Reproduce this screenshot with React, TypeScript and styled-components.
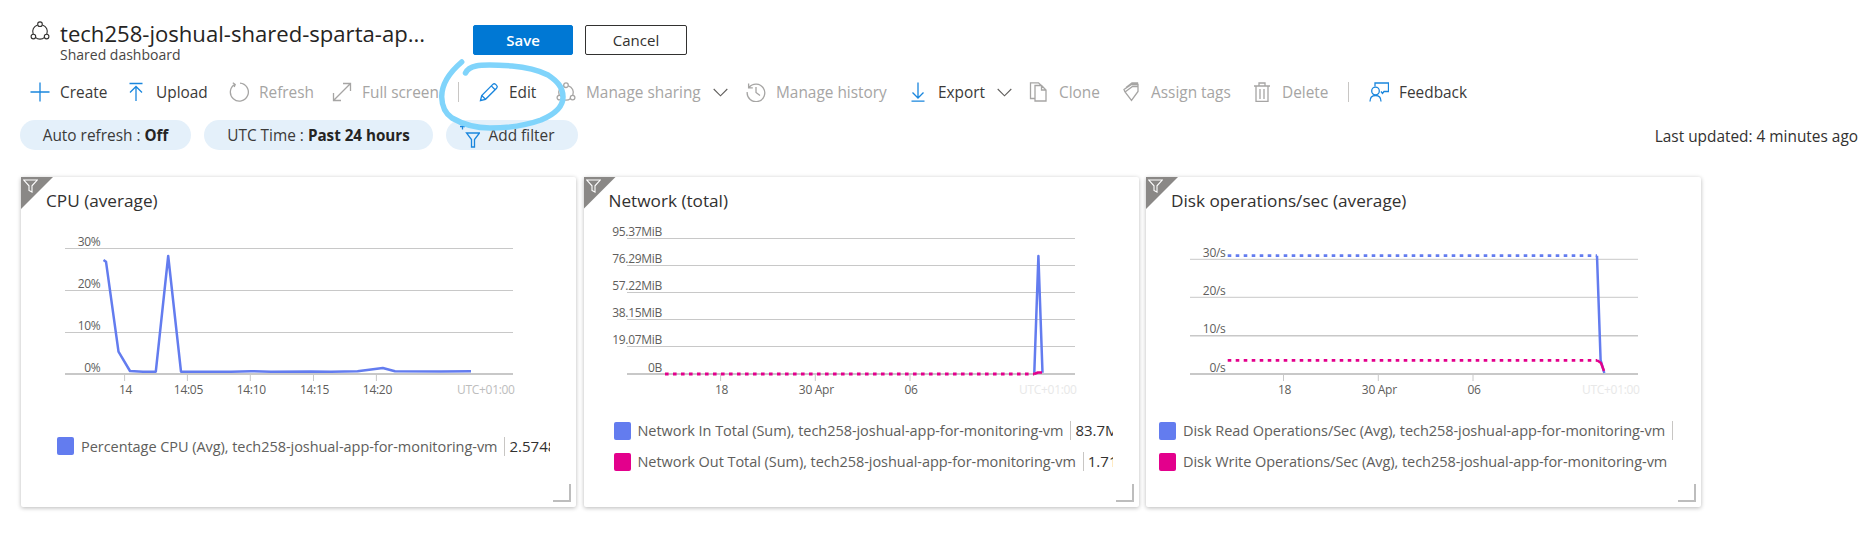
import * as React from 'react'
import styled, { createGlobalStyle } from 'styled-components'

const GlobalStyle = createGlobalStyle`
  html, body {
    margin: 0;
    padding: 0;
    background: #fff;
  }
  body {
    font-family: 'Open Sans', 'Noto Sans', sans-serif;
    color: #323130;
  }
`

const Page = styled.div`
  position: relative;
  width: 1867px;
  height: 543px;
  overflow: hidden;
`

const TitleRow = styled.div`
  display: flex;
  align-items: flex-start;
  padding: 19px 0 0 30px;
`

const TitleIcon = styled.svg`
  width: 20px;
  height: 20px;
  margin-top: 2px;
  flex: none;
`

const TitleBlock = styled.div`
  width: 413px;
  margin-left: 10px;
`

const Title = styled.div`
  font-size: 22.1px;
  line-height: 28px;
  white-space: nowrap;
  color: #252423;
`

const SubTitle = styled.div`
  font-size: 14px;
  line-height: 16px;
  color: #484644;
`

const HeaderButton = styled.button<{ $primary?: boolean }>`
  width: ${p => (p.$primary ? '100px' : '102px')};
  height: 30px;
  margin: 6px 12px 0 0;
  padding: 0;
  border-radius: 2px;
  border: 1px solid ${p => (p.$primary ? '#0078d4' : '#323130')};
  background: ${p => (p.$primary ? '#0078d4' : '#fff')};
  color: ${p => (p.$primary ? '#fff' : '#323130')};
  font-family: inherit;
  font-size: 15px;
  font-weight: ${p => (p.$primary ? 600 : 500)};
`

const Toolbar = styled.div`
  display: flex;
  align-items: center;
  height: 30px;
  margin: 14px 0 0 30px;
`

const ToolItem = styled.div<{ $w: number; $disabled?: boolean }>`
  display: flex;
  align-items: center;
  flex: none;
  width: ${p => p.$w}px;
  font-size: 15.4px;
  white-space: nowrap;
  color: ${p => (p.$disabled ? '#a6a5a4' : '#3b3a39')};
`

const ToolIcon = styled.svg`
  width: 20px;
  height: 20px;
  flex: none;
  margin-right: 10px;
`

const Chevron = styled.svg`
  width: 15px;
  height: 9px;
  margin-left: 12px;
  flex: none;
`

const ToolSep = styled.div<{ $w: number }>`
  flex: none;
  width: ${p => p.$w}px;
  height: 20px;
  box-sizing: border-box;
  border-left: 1px solid #c8c6c4;
`

const FilterBar = styled.div`
  display: flex;
  align-items: center;
  gap: 13px;
  margin: 13px 0 0 20px;
  height: 30px;
`

const Pill = styled.div<{ $w: number }>`
  display: flex;
  align-items: center;
  justify-content: center;
  box-sizing: border-box;
  width: ${p => p.$w}px;
  height: 30px;
  border-radius: 15px;
  background: #e4f0fa;
  font-size: 15.4px;
  white-space: nowrap;
  color: #3b3a39;

  b {
    font-weight: 700;
    font-size: 15.2px;
    color: #252423;
    margin-left: 4px;
  }
`

const FilterIcon = styled.svg`
  width: 20px;
  height: 26px;
  margin: 2px 9px 0 -10px;
`

const LastUpdated = styled.div`
  margin-left: auto;
  margin-right: 9px;
  padding-top: 3px;
  font-size: 15.4px;
  color: #323130;
`

const CardRow = styled.div`
  display: flex;
  gap: 7.5px;
  margin: 27px 0 0 21px;
`

const Card = styled.div`
  position: relative;
  box-sizing: border-box;
  width: 555px;
  height: 330px;
  background: #fff;
  border-radius: 2px;
  box-shadow: 0 1px 4px rgba(0, 0, 0, 0.28);
`

const Corner = styled.div`
  position: absolute;
  left: 0;
  top: 0;
  width: 32px;
  height: 32px;
  background: #8a8886;
  clip-path: polygon(0 0, 100% 0, 0 100%);
`

const CornerIcon = styled.svg`
  position: absolute;
  left: 2px;
  top: 2px;
  width: 15px;
  height: 14px;
`

const CardTitle = styled.div`
  height: 48px;
  padding-left: 25px;
  font-size: 17.2px;
  line-height: 47px;
  color: #323130;
`

const ChartSvg = styled.svg`
  display: block;
  width: 555px;
  height: 175px;
`

const AxisText = styled.text<{ $fill?: string }>`
  font-family: 'Open Sans', 'Noto Sans', sans-serif;
  font-size: 12px;
  letter-spacing: -0.3px;
  fill: ${p => p.$fill || '#605e5c'};
  dominant-baseline: central;
`

const Legend = styled.div<{ $left: number; $width: number }>`
  display: flex;
  flex-direction: column;
  justify-content: center;
  gap: 13px;
  box-sizing: border-box;
  height: 92px;
  margin-left: ${p => p.$left}px;
  width: ${p => p.$width}px;
  overflow: hidden;
`

const LegendRow = styled.div`
  display: flex;
  align-items: center;
  height: 18px;
  white-space: nowrap;
`

const Swatch = styled.div<{ $color: string }>`
  flex: none;
  width: 17px;
  height: 18px;
  border-radius: 2px;
  background: ${p => p.$color};
`

const LegendLabel = styled.div`
  flex: none;
  margin-left: 7px;
  padding-right: 7px;
  font-size: 14.5px;
  letter-spacing: -0.05px;
  color: #605e5c;
`

const LegendValue = styled.div`
  flex: none;
  height: 19px;
  padding-left: 4px;
  border-left: 1px solid #c8c6c4;
  font-size: 15px;
  line-height: 19px;
  color: #323130;
`

const ResizeHandle = styled.div`
  position: absolute;
  right: 5px;
  bottom: 5px;
  width: 16px;
  height: 16px;
  border-right: 2px solid #bdbdbd;
  border-bottom: 2px solid #bdbdbd;
`

const PenMark = styled.svg`
  position: absolute;
  left: 0;
  top: 0;
  width: 1867px;
  height: 543px;
  pointer-events: none;
`

const BLUE = '#1a86dd'
const GREY = '#a6a5a4'
const SERIES_BLUE = '#637cef'
const SERIES_PINK = '#e3008c'

const Glyph: React.FC<{ color: string; w?: number; children: React.ReactNode }> = ({ color, w = 1.3, children }) => (
  <ToolIcon viewBox="0 0 20 20" fill="none" stroke={color} strokeWidth={w}>
    {children}
  </ToolIcon>
)

const SharePaths = () => (
  <>
    <path d="M7.6 3.9A7 7 0 0 0 3.2 13.2M12.4 3.9A7 7 0 0 1 16.8 13.2M5.4 16.4a7 7 0 0 0 9.2 0" />
    <circle cx="10" cy="3.2" r="2.3" />
    <circle cx="3.4" cy="15.6" r="2.3" />
    <circle cx="16.6" cy="15.6" r="2.3" />
  </>
)

const DownChevron = () => (
  <Chevron viewBox="0 0 15 9" fill="none" stroke="#605e5c" strokeWidth="1.1">
    <path d="M0.7 1l6.8 6.8L14.3 1" />
  </Chevron>
)

type Series = { color: string; dashed?: string; solid: string }

type ChartDef = {
  title: string
  grid: { y: number; w?: number }[]
  left: number
  labelRight: number
  yLabels: { text: string; y: number }[]
  ticks: { x: number; text: string }[]
  utc: { x: number; fill: string }
  series: Series[]
  legend: { left: number; width: number; rows: { color: string; label: string; value?: string }[] }
}

const VM = 'tech258-joshual-app-for-monitoring-vm'

const charts: ChartDef[] = [
  {
    title: 'CPU (average)',
    left: 44,
    labelRight: 79.5,
    grid: [{ y: 23.5 }, { y: 65.5 }, { y: 107.5 }, { y: 149, w: 2 }],
    yLabels: [
      { text: '30%', y: 16.7 },
      { text: '20%', y: 58.7 },
      { text: '10%', y: 100.7 },
      { text: '0%', y: 142.7 },
    ],
    ticks: [
      { x: 103.6, text: '14' },
      { x: 166.4, text: '14:05' },
      { x: 229.3, text: '14:10' },
      { x: 292.5, text: '14:15' },
      { x: 355.4, text: '14:20' },
    ],
    utc: { x: 436, fill: '#bdbdbd' },
    series: [
      {
        color: SERIES_BLUE,
        solid:
          '82.5,35 85,36.7 97.5,126.7 109,146 122,146.7 134.8,146.7 147.2,31 160,146.7 210,146.7 230,146.2 250,146.7 290,146.4 310,146.7 336.5,146.3 361.8,143 374,146.3 420,146.5 450,146.3',
      },
    ],
    legend: {
      left: 36,
      width: 492.5,
      rows: [{ color: SERIES_BLUE, label: `Percentage CPU (Avg), ${VM}`, value: '2.5748 %' }],
    },
  },
  {
    title: 'Network (total)',
    left: 43,
    labelRight: 78,
    grid: [{ y: 13.5 }, { y: 40.5 }, { y: 67.5 }, { y: 94.5 }, { y: 121.5 }, { y: 149, w: 2 }],
    yLabels: [
      { text: '95.37MiB', y: 6.3 },
      { text: '76.29MiB', y: 33.3 },
      { text: '57.22MiB', y: 60.3 },
      { text: '38.15MiB', y: 87.7 },
      { text: '19.07MiB', y: 114.7 },
      { text: '0B', y: 142.7 },
    ],
    ticks: [
      { x: 136.6, text: '18' },
      { x: 231.3, text: '30 Apr' },
      { x: 326, text: '06' },
    ],
    utc: { x: 435, fill: '#e8e8e8' },
    series: [
      { color: SERIES_BLUE, solid: '450.3,147.7 454.4,31 458.5,147.7' },
      { color: SERIES_PINK, dashed: 'M81 149H450', solid: '450,149 454,147.5 458,147.5' },
    ],
    legend: {
      left: 30,
      width: 499,
      rows: [
        { color: SERIES_BLUE, label: `Network In Total (Sum), ${VM}`, value: '83.7MiB' },
        { color: SERIES_PINK, label: `Network Out Total (Sum), ${VM}`, value: '1.71MiB' },
      ],
    },
  },
  {
    title: 'Disk operations/sec (average)',
    left: 44,
    labelRight: 79.5,
    grid: [{ y: 34.3 }, { y: 72.3 }, { y: 110.7, w: 1.6 }, { y: 149, w: 2 }],
    yLabels: [
      { text: '30/s', y: 27.3 },
      { text: '20/s', y: 65.3 },
      { text: '10/s', y: 103.7 },
      { text: '0/s', y: 142.7 },
    ],
    ticks: [
      { x: 137.5, text: '18' },
      { x: 232.3, text: '30 Apr' },
      { x: 327, text: '06' },
    ],
    utc: { x: 436, fill: '#e8e8e8' },
    series: [
      { color: SERIES_BLUE, dashed: 'M81.7 30.7H451', solid: '451,30.7 454.6,135 458.3,148' },
      { color: SERIES_PINK, dashed: 'M81.7 135.3H451', solid: '451,135.3 455,138 458,146' },
    ],
    legend: {
      left: 13,
      width: 516,
      rows: [
        { color: SERIES_BLUE, label: `Disk Read Operations/Sec (Avg), ${VM}`, value: ' ' },
        { color: SERIES_PINK, label: `Disk Write Operations/Sec (Avg), ${VM}` },
      ],
    },
  },
]

const Chart: React.FC<{ def: ChartDef }> = ({ def }) => (
  <ChartSvg viewBox="0 0 555 175">
    {def.grid.map(g => (
      <line key={g.y} x1={def.left} x2={def.left + 448} y1={g.y} y2={g.y} stroke="#c8c8c8" strokeWidth={g.w || 1} />
    ))}
    {def.ticks.map(t => (
      <React.Fragment key={t.text}>
        <line x1={t.x} x2={t.x} y1={149} y2={156} stroke="#c8c8c8" />
        <AxisText x={t.x + 1} y={164.3} textAnchor="middle">
          {t.text}
        </AxisText>
      </React.Fragment>
    ))}
    {def.yLabels.map(l => (
      <AxisText key={l.text} x={def.labelRight} y={l.y} textAnchor="end">
        {l.text}
      </AxisText>
    ))}
    <AxisText x={def.utc.x} y={164.3} $fill={def.utc.fill}>
      UTC+01:00
    </AxisText>
    {def.series.map(s => (
      <React.Fragment key={s.color}>
        {s.dashed && <path d={s.dashed} fill="none" stroke={s.color} strokeWidth="2.8" strokeDasharray="3.6 4.4" />}
        <polyline points={s.solid} fill="none" stroke={s.color} strokeWidth="2.5" strokeLinejoin="round" />
      </React.Fragment>
    ))}
  </ChartSvg>
)

const App: React.FC = () => (
  <Page>
    <GlobalStyle />
    <TitleRow>
      <TitleIcon viewBox="0 0 20 20" fill="none" stroke="#323130" strokeWidth="1.1">
        <SharePaths />
      </TitleIcon>
      <TitleBlock>
        <Title>tech258-joshual-shared-sparta-ap...</Title>
        <SubTitle>Shared dashboard</SubTitle>
      </TitleBlock>
      <HeaderButton $primary>Save</HeaderButton>
      <HeaderButton>Cancel</HeaderButton>
    </TitleRow>

    <Toolbar>
      <ToolItem $w={96}>
        <Glyph color={BLUE}>
          <path d="M10 0.5v19M0.5 10h19" />
        </Glyph>
        Create
      </ToolItem>
      <ToolItem $w={103}>
        <Glyph color={BLUE}>
          <path d="M3.5 1.5h13M10 19V4.5M4 10.5l6-6 6 6" />
        </Glyph>
        Upload
      </ToolItem>
      <ToolItem $w={103} $disabled>
        <Glyph color={GREY}>
          <path d="M6 2.2A9 9 0 1 0 11 1.1M3.8 0.8L6.2 2.4 5.2 5" />
        </Glyph>
        Refresh
      </ToolItem>
      <ToolItem $w={126} $disabled>
        <Glyph color={GREY}>
          <path d="M1.5 18.5L18.5 1.5M11 1.5h7.5V9M1.5 11v7.5H9" />
        </Glyph>
        Full screen
      </ToolItem>
      <ToolSep $w={21} />
      <ToolItem $w={77}>
        <Glyph color={BLUE}>
          <path d="M1.5 18.5l1.2-5L13.8 2.4a2 2 0 0 1 2.8 0l1 1a2 2 0 0 1 0 2.8L6.5 17.3zM2.7 13.5l3.8 3.8M12.3 3.9l3.8 3.8" />
        </Glyph>
        Edit
      </ToolItem>
      <ToolItem $w={190} $disabled>
        <Glyph color={GREY}>
          <SharePaths />
        </Glyph>
        Manage sharing
        <DownChevron />
      </ToolItem>
      <ToolItem $w={162} $disabled>
        <Glyph color={GREY}>
          <path d="M3 5.5A8.8 8.8 0 1 1 1.2 10M2.6 1.6v4.2h4.2M10 5v5.5l4 3" />
        </Glyph>
        Manage history
      </ToolItem>
      <ToolItem $w={121}>
        <Glyph color={BLUE}>
          <path d="M10 0.5v15.5M4.5 10.5l5.5 5.5 5.5-5.5M3.5 19.2h13" />
        </Glyph>
        Export
        <DownChevron />
      </ToolItem>
      <ToolItem $w={92} $disabled>
        <Glyph color={GREY}>
          <path d="M5.5 16.5H1.5V0.8H9.5l2.5 2.5M6 3.5h6.5l4.5 4.5v11H6zM12.5 3.5V8H17" />
        </Glyph>
        Clone
      </ToolItem>
      <ToolItem $w={131} $disabled>
        <Glyph color={GREY}>
          <path d="M4 10l7.5-5.5H17v5L10.500 18.500zM4 10l-1-2.500L10.500 2.500H17v2M5 5.500L11 1h5.500v1.500" />
        </Glyph>
        Assign tags
      </ToolItem>
      <ToolItem $w={96} $disabled>
        <Glyph color={GREY}>
          <path d="M2 4h16M4 4v15.5h12V4M7 4V1h6v3M8 7v10M12 7v10" />
        </Glyph>
        Delete
      </ToolItem>
      <ToolSep $w={21} />
      <ToolItem $w={110}>
        <Glyph color={BLUE}>
          <path d="M6 4.5V1h13.5v8.5H15l-1.5 2-1.5-2M1 19.500c0-4 2.200-6 5.500-6s5.500 2 5.500 6" />
          <circle cx="6.5" cy="9" r="3.8" />
        </Glyph>
        Feedback
      </ToolItem>
    </Toolbar>

    <FilterBar>
      <Pill $w={171}>
        Auto refresh : <b>Off</b>
      </Pill>
      <Pill $w={229}>
        UTC Time : <b>Past 24 hours</b>
      </Pill>
      <Pill $w={132}>
        <FilterIcon viewBox="0 0 20 26" fill="none" stroke={BLUE} strokeWidth="1.3">
          <path d="M0 3.5h5M2.500 0.500v6M6.500 10h13l-5 6.500V24h-3v-7.500z" />
        </FilterIcon>
        Add filter
      </Pill>
      <LastUpdated>Last updated: 4 minutes ago</LastUpdated>
    </FilterBar>

    <CardRow>
      {charts.map(c => (
        <Card key={c.title}>
          <Corner />
          <CornerIcon viewBox="0 0 15 14" fill="none" stroke="#fff" strokeWidth="1.1">
            <path d="M0.8 1h13.400L9 6.800V13l-3-1.500V6.800z" />
          </CornerIcon>
          <CardTitle>{c.title}</CardTitle>
          <Chart def={c} />
          <Legend $left={c.legend.left} $width={c.legend.width}>
            {c.legend.rows.map(r => (
              <LegendRow key={r.label}>
                <Swatch $color={r.color} />
                <LegendLabel>{r.label}</LegendLabel>
                {r.value && <LegendValue>{r.value}</LegendValue>}
              </LegendRow>
            ))}
          </Legend>
          <ResizeHandle />
        </Card>
      ))}
    </CardRow>

    <PenMark viewBox="0 0 1867 543" fill="none">
      <path
        d="M461.700 62C450 72 441.500 84 441.700 97C442 108 446 114 452 118C464 125 475 128 490 128C510 128 527 125 541 120C553 115 563 107 563 97C563 87 557 81 548 75C538 70 525 67 512 66C498 65 485 64 476 66C471 67 467 70 465.500 73"
        stroke="#80d4fb"
        strokeWidth="5.5"
        strokeLinecap="round"
      />
    </PenMark>
  </Page>
)

export default App
